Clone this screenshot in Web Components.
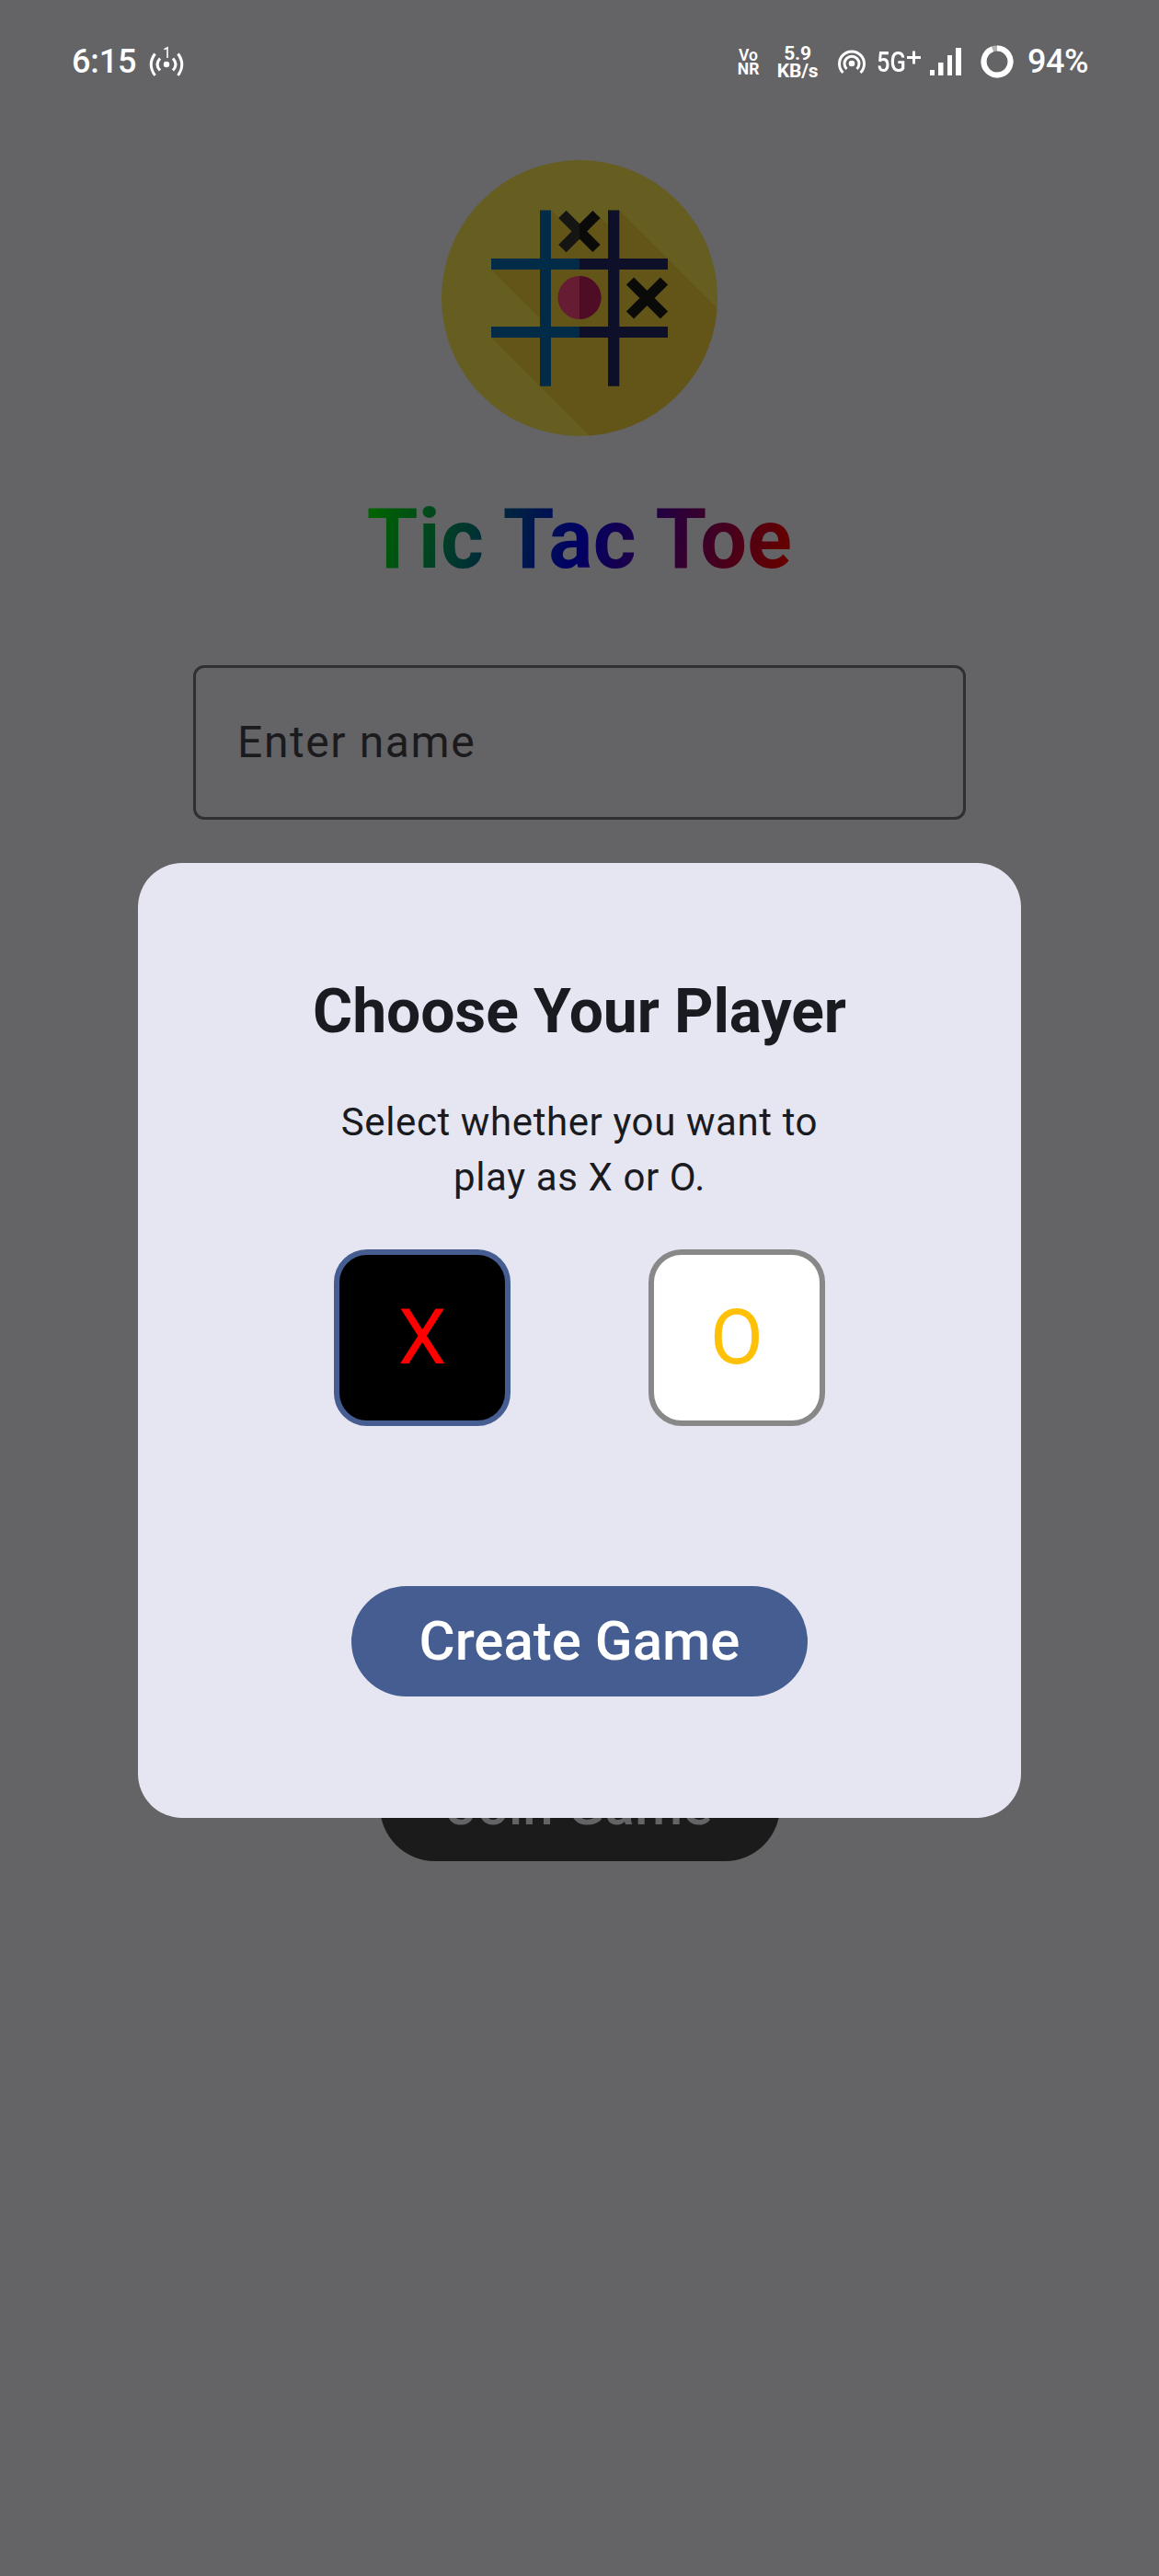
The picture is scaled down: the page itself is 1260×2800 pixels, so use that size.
<!DOCTYPE html>
<html lang="en">
<head>
<meta charset="utf-8">
<title>Tic Tac Toe</title>
<style>
html,body{margin:0;padding:0;background:#646366}
body{font-family:Roboto,sans-serif;width:1260px;height:2800px;overflow:hidden}
</style>
</head>
<body>
<ttt-app></ttt-app>
<script>
const define = (name, html) => customElements.define(name, class extends HTMLElement {
  constructor() {
    super();
    const t = document.createElement('template');
    t.innerHTML = html;
    this.attachShadow({ mode: 'open' }).append(t.content.cloneNode(true));
  }
});

define('status-bar', `
<style>
:host{display:flex;box-sizing:border-box;height:134px;padding:0 77px 0 78px;color:#fff;align-items:center;justify-content:space-between;line-height:1}
div{display:flex;align-items:center}
svg{display:block;flex:none}
.time,.pct{font-size:36px;font-weight:500}
.time{letter-spacing:-.1px}
.pct{letter-spacing:-.5px;margin-left:15px}
.stack{display:flex;flex-direction:column;align-items:center;font-weight:700;margin-top:2px}
.vo{font-size:17.5px;line-height:15px;width:25px}
.vo .v{font-weight:600}
.kb{font-size:21px;line-height:19px;width:46px;margin-left:18px;letter-spacing:-.2px}
.net{font-size:31px;width:37px;margin-left:11px;white-space:nowrap;font-weight:500}
.net span{display:block;transform:scaleX(.82);transform-origin:0 50%}
.cast{margin-left:14px}
.spot{margin:1px 0 0 20px}
.plus{margin:-10px 0 0 -4px}
.bars{margin-left:10px}
.ring{margin-left:21px}
</style>
<div><span class="time">6:15</span>
<svg class="cast" width="38" height="36" viewBox="162 49 38 36" fill="none" stroke="#fff" stroke-width="3">
<circle cx="181" cy="70" r="3.2" fill="#fff" stroke="none"/>
<path d="M174 63.500Q168 70 174 76.500M188 63.500Q194 70 188 76.500" />
<path d="M168.500 58.500Q160 70 168.500 82M193.500 58.500Q202 70 193.500 82"/>
<path d="M178.500 53.800l3.500-2V63" stroke-width="1.600"/></svg></div>
<div>
<span class="stack vo"><span class="v">Vo</span><span>NR</span></span>
<span class="stack kb"><span>5.9</span><span>KB/s</span></span>
<svg class="spot" width="32" height="30" viewBox="910 53 32 30" fill="none" stroke="#fff" stroke-width="3">
<circle cx="926" cy="69" r="3.300" fill="#fff" stroke="none"/>
<path d="M920.500 75a8 8 0 1 1 11 0M916.500 79a13.500 13.500 0 1 1 19 0"/></svg>
<span class="net"><span>5G</span></span>
<svg class="plus" width="15" height="15" viewBox="0 0 15 15" stroke="#fff" stroke-width="3"><path d="M7.500 .5V14.500M0 7.500H15"/></svg>
<svg class="bars" width="34" height="30" viewBox="0 0 34 30" fill="#fff"><path d="M0 24h5v6H0zM9 16h5.500v14H9zM19 8h5v22h-5zM28 0h6v30h-6z"/></svg>
<svg class="ring" width="36" height="36" viewBox="0 0 36 36" fill="none" stroke-width="6"><circle cx="18" cy="18" r="14.500" stroke="#b2b2b3"/><path d="M18 3.500A14.500 14.500 0 1 1 13 4.400" stroke="#fff"/></svg>
<span class="pct">94%</span></div>`);

define('game-logo', `
<style>:host{display:block;width:300px;height:300px}svg{display:block}</style>
<svg width="300" height="300" viewBox="480 174 300 300">
<defs><clipPath id="c"><circle cx="630" cy="324" r="150"/></clipPath></defs>
<circle cx="630" cy="324" r="150" fill="#655e20"/>
<g clip-path="url(#c)"><path fill="#635418" d="M534 293H587V345.500zM599 228.500L621.500 251 630 243.500 645 229.500 661 245V228.500H673L830 385.500V520H687L534 367H587V293H599z"/></g>
<path fill="#022b47" d="M587 228.500h12V281h31v12h-31v62h31v12h-31v52.700h-12V367h-53v-12h53v-62h-53v-12h53z"/>
<path fill="#0d1028" d="M661 228.500h12.300V281H726v12h-52.700v62H726v12h-52.700v52.700H661V367h-31v-12h31v-62h-31v-12h31z"/>
<path d="M611.500 233l37 37m0-37l-37 37" fill="none" stroke="#0a0a09" stroke-width="11.600"/>
<path d="M611.500 233L630 251.500M611.500 270L630 251.500" fill="none" stroke="#151513" stroke-width="11.600"/>
<path d="M630 243.300l8.200 8.200-8.200 8.200z" fill="#0a0a09"/>
<path d="M685 305.500l37 37m0-37l-37 37" fill="none" stroke="#0a0a09" stroke-width="11.600"/>
<circle cx="630" cy="323.500" r="23.500" fill="#661c33"/><path d="M630 300a23.500 23.500 0 0 1 0 47z" fill="#4e0d25"/>
</svg>`);

define('rainbow-title', `
<style>:host{display:block;font-size:90px;font-weight:700;line-height:108px;letter-spacing:.4px;white-space:nowrap;color:transparent;background:linear-gradient(105deg,#006400 2%,#000064 50%,#640000 96%);-webkit-background-clip:text;background-clip:text}</style><slot></slot>`);

define('name-field', `
<style>:host{display:flex;box-sizing:border-box;width:840px;height:168px;border:3px solid #2e3031;border-radius:12px;padding:0 45px 2px;align-items:center;font-size:48px;letter-spacing:1.6px;color:#1b1b1e}</style><slot></slot>`);

define('pill-button', `
<style>:host{display:flex;box-sizing:border-box;height:120px;border-radius:60px;padding-bottom:2px;align-items:center;justify-content:center;font-size:60px;font-weight:500;white-space:nowrap;color:#fff;background:#465d91;width:496px}
:host([dim]){width:435px;background:#1b1b1b;color:#646466}</style><slot></slot>`);

define('player-tile', `
<style>:host{display:flex;box-sizing:border-box;width:192px;height:192px;border:6px solid #888;border-radius:36px;background:#fff;color:#ffc107;align-items:center;justify-content:center;font-size:84px;line-height:1}
:host([selected]){background:#000;border-color:#465d91;color:#f00}</style><slot></slot>`);

define('player-dialog', `
<style>
:host{display:flex;box-sizing:border-box;width:960px;height:1038px;border-radius:48px;background:#e6e6f2;color:#1a1b21;flex-direction:column;align-items:center;padding-top:120px}
h2{margin:0;font-size:66px;line-height:84px;font-weight:700;letter-spacing:-.1px;white-space:nowrap}
p{margin:48px 0 0;width:600px;text-align:center;font-size:42px;line-height:60px;letter-spacing:.6px}
.tiles{display:flex;gap:150px;margin-top:48px}
pill-button{margin-top:174px}
</style>
<h2>Choose Your Player</h2>
<p>Select whether you want to<br>play as X or O.</p>
<div class="tiles"><player-tile selected>X</player-tile><player-tile>O</player-tile></div>
<pill-button>Create Game</pill-button>`);

define('ttt-app', `
<style>
:host{display:block;position:relative;width:1260px;height:2800px;background:#646366}
main{display:flex;flex-direction:column;align-items:center}
game-logo{margin-top:40px}
rainbow-title{margin-top:59px}
name-field{margin-top:82px}
pill-button{margin-top:1012px}
player-dialog{position:absolute;left:150px;top:938px}
</style>
<status-bar></status-bar>
<main><game-logo></game-logo><rainbow-title>Tic Tac Toe</rainbow-title><name-field>Enter name</name-field><pill-button dim>Join Game</pill-button></main>
<player-dialog></player-dialog>`);
</script>
</body>
</html>
